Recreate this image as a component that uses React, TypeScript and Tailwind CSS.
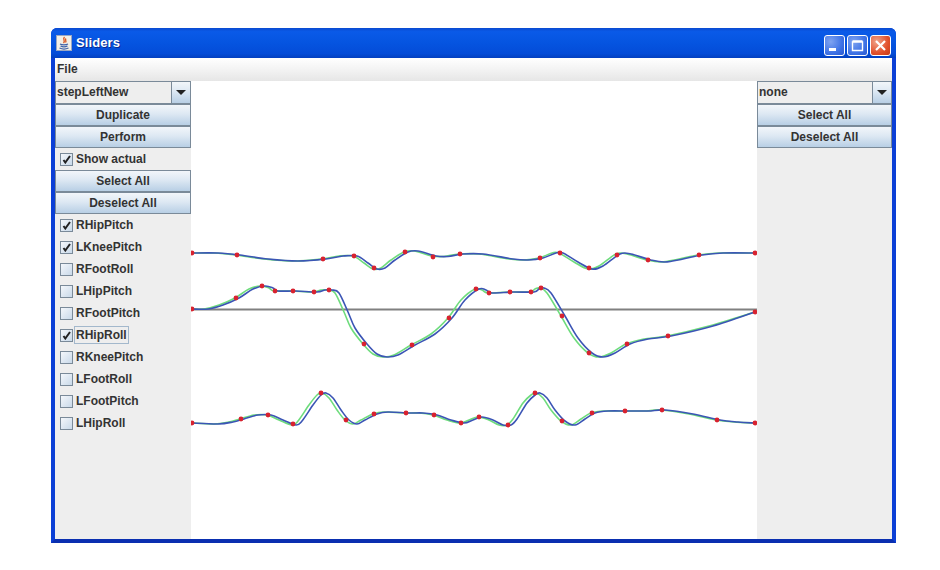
import React from 'react';

// points the curve passes through, hand read off the plot
const curves: [number, number][][] = [
  [[192, 253], [215, 253], [237, 255], [265, 259], [295, 261], [323, 259], [340, 256], [354, 256], [365, 263], [374, 269], [382, 268], [392, 260], [405, 252], [415, 251], [433, 256], [445, 256.5], [460, 254], [480, 254], [510, 259], [525, 260], [540, 258], [553, 253], [560, 253], [575, 262], [589, 269], [600, 266], [617, 254], [628, 254], [648, 260], [662, 262], [680, 259], [699, 255], [720, 253], [755, 253]],
  [[192, 309], [205, 309], [220, 305], [236, 298], [250, 289], [262, 286], [270, 288], [275, 291], [293, 291], [314, 292], [322, 290], [329, 290], [336, 293], [345, 312], [352, 328], [364, 344], [374, 354], [384, 357], [395, 355], [412, 345], [432, 334], [449, 318], [462, 300], [476, 289], [483, 290], [489, 293], [510, 292], [531, 292], [536, 289], [541, 288], [548, 293], [562, 316], [575, 338], [589, 353], [600, 357], [612, 353], [627, 344], [645, 339], [668, 336], [710, 326], [755, 312]],
  [[192, 423], [215, 424], [230, 422], [241, 419], [255, 415], [268, 415], [280, 420], [293, 425], [299, 421], [310, 405], [318, 395], [323, 393], [330, 398], [338, 410], [346, 420], [354, 424], [362, 420], [374, 414], [385, 412], [406, 413], [420, 413], [434, 415], [448, 420], [461, 423], [470, 420], [479, 417], [490, 420], [500, 425], [508, 425], [514, 419], [524, 403], [532, 395], [537, 393], [544, 398], [552, 410], [562, 421], [572, 425], [582, 419], [592, 413], [605, 411], [625, 411], [645, 411], [662, 410], [690, 414], [717, 420], [735, 422], [755, 423]],
];

const dots: [number, number][][] = [
  [[192, 253], [237, 255], [323, 259], [354, 256], [374, 268], [405, 252], [433, 257], [460, 254], [540, 258], [560, 253], [589, 268], [617, 255], [648, 260], [699, 255], [755, 253]],
  [[192, 309], [236, 298], [262, 286], [275, 291], [293, 291], [314, 292], [329, 290], [364, 344], [412, 345], [449, 318], [476, 289], [489, 293], [510, 292], [531, 292], [541, 288], [562, 316], [589, 353], [627, 344], [668, 336], [755, 312]],
  [[192, 423], [241, 419], [268, 415], [293, 424], [321, 393], [346, 420], [374, 414], [406, 413], [434, 415], [461, 423], [479, 417], [508, 425], [535, 393], [562, 421], [592, 413], [625, 411], [662, 410], [717, 420], [755, 423]],
];

// catmull-rom through the points, as cubic segments
function smooth(pts: [number, number][], shift: number) {
  const p = pts.map(([x, y], i) => [i === 0 || i === pts.length - 1 ? x : x + shift, y]);
  let d = `M${p[0][0]},${p[0][1]}`;
  for (let i = 0; i < p.length - 1; i++) {
    const a = p[Math.max(i - 1, 0)];
    const b = p[i];
    const c = p[i + 1];
    const e = p[Math.min(i + 2, p.length - 1)];
    d += ` C${b[0] + (c[0] - a[0]) / 6},${b[1] + (c[1] - a[1]) / 6} ${c[0] - (e[0] - b[0]) / 6},${c[1] - (e[1] - b[1]) / 6} ${c[0]},${c[1]}`;
  }
  return d;
}

function SwingButton({ label }: { label: string }) {
  return (
    <button className="h-[22px] w-full border border-[#7a8a99] bg-[linear-gradient(#f2f6fa,#dde8f3_45%,#b8cfe5)] text-center text-xs font-bold text-[#333]">
      {label}
    </button>
  );
}

function Combo({ value }: { value: string }) {
  return (
    <div className="flex h-[23px] w-full border border-[#7a8a99] bg-[#eeeeee]">
      <span className="flex-1 pl-[1px] text-xs font-bold leading-[20px] text-[#333]">{value}</span>
      <span className="flex w-[19px] items-center justify-center border-l border-[#7a8a99] bg-[linear-gradient(#f2f6fa,#dde8f3_45%,#b8cfe5)]">
        <span className="h-0 w-0 border-x-[5px] border-t-[5px] border-x-transparent border-t-[#222]" />
      </span>
    </div>
  );
}

function Check({ label, checked, focus }: { label: string; checked?: boolean; focus?: boolean }) {
  return (
    <div className="flex h-[22px] items-center pl-[5px]">
      <span className="flex h-[13px] w-[13px] items-center justify-center border border-[#7a8a99] bg-[linear-gradient(135deg,#f4f7fb,#c9d9e9)]">
        {checked && (
          <svg width="9" height="9" viewBox="0 0 9 9">
            <path d="M1.5 5 L3.3 7.5 L8 1" fill="none" stroke="#222" strokeWidth="2" />
          </svg>
        )}
      </span>
      <span className={`ml-[2px] px-[1px] text-xs font-bold leading-[16px] text-[#333] ${focus ? 'outline outline-1 outline-[#a3b8cc]' : ''}`}>
        {label}
      </span>
    </div>
  );
}

function JavaIcon() {
  return (
    <svg width="16" height="16" viewBox="0 0 16 16">
      <rect x="0.5" y="0.5" width="15" height="15" fill="#f3efe6" stroke="#9aa7c2" />
      <path d="M8.5 2 C6 4.5 10 5.5 7.5 8 M10 3.5 C8.5 5 11 6 9.5 7.5" fill="none" stroke="#d9531e" strokeWidth="1.3" />
      <path d="M4 9 C6 10.2 10 10.2 12 9 M4.5 11 C6.5 12 9.5 12 11.5 11 M3.5 13 C6 14.2 10 14.2 12.5 13" fill="none" stroke="#3f62a8" strokeWidth="1.1" />
    </svg>
  );
}

function WinButton({ kind }: { kind: 'min' | 'max' | 'close' }) {
  const bg =
    kind === 'close'
      ? 'bg-[radial-gradient(circle_at_30%_30%,#f0a58c,#e2512c_60%,#c63a17)]'
      : 'bg-[radial-gradient(circle_at_30%_30%,#7fa3f0,#3f73e6_60%,#2a58d0)]';
  return (
    <div className={`flex h-[21px] w-[21px] items-center justify-center rounded-[3px] border border-white ${bg}`}>
      <svg width="15" height="15" viewBox="0 0 15 15">
        {kind === 'min' && <rect x="2" y="10" width="7" height="3" fill="#fff" />}
        {kind === 'max' && <path d="M2.5 4 H12.5 V12.5 H2.5 Z M2.5 3 H12.5" fill="none" stroke="#fff" strokeWidth="1.4" />}
        {kind === 'close' && <path d="M3 3 L12 12 M12 3 L3 12" stroke="#fff" strokeWidth="2.2" />}
      </svg>
    </div>
  );
}

const joints: [string, boolean, boolean][] = [
  ['RHipPitch', true, false],
  ['LKneePitch', true, false],
  ['RFootRoll', false, false],
  ['LHipPitch', false, false],
  ['RFootPitch', false, false],
  ['RHipRoll', true, true],
  ['RKneePitch', false, false],
  ['LFootRoll', false, false],
  ['LFootPitch', false, false],
  ['LHipRoll', false, false],
];

export default function App() {
  return (
    <div className="h-[570px] w-[940px] overflow-hidden bg-white pl-[51px] pt-[28px] font-['Liberation_Sans',Arial,sans-serif]">
      <div className="flex h-[515px] w-[845px] flex-col rounded-t-[6px] border-x-4 border-b-4 border-x-[#0b3fd6] border-b-[#0a2fb0] bg-[#0b3fd6]">
        {/* title bar */}
        <div className="-mx-1 flex h-[30px] shrink-0 items-center rounded-t-[6px] bg-[linear-gradient(#0a4ad0,#0a5ae8_12%,#0554e0_50%,#044cd8_85%,#0340c0)] pl-[5px] pr-[5px]">
          <JavaIcon />
          <span className="ml-[4px] flex-1 text-[13px] font-bold tracking-[0.1px] text-white [text-shadow:1px_1px_#0a2a90]">Sliders</span>
          <div className="mt-[4px] flex gap-[2px]">
            <WinButton kind="min" />
            <WinButton kind="max" />
            <WinButton kind="close" />
          </div>
        </div>
        {/* menu */}
        <div className="flex h-[23px] shrink-0 items-center bg-[linear-gradient(#ffffff,#f3f3f3_50%,#e6e6e6)] pb-[2px] pl-[2px] text-xs font-bold text-[#333]">
          File
        </div>
        <div className="flex min-h-0 flex-1">
          <div className="flex w-[136px] shrink-0 flex-col bg-[#eeeeee]">
            <Combo value="stepLeftNew" />
            <SwingButton label="Duplicate" />
            <SwingButton label="Perform" />
            <Check label="Show actual" checked />
            <SwingButton label="Select All" />
            <SwingButton label="Deselect All" />
            {joints.map(([name, on, focus]) => (
              <Check key={name} label={name} checked={on} focus={focus} />
            ))}
          </div>
          <div className="min-w-0 flex-1 bg-white">
            <svg width="566" height="458" viewBox="191 81 566 458" className="block">
              <line x1="191" y1="309.5" x2="757" y2="309.5" stroke="#808080" strokeWidth="2" />
              {curves.map((pts, i) => (
                <g key={i} fill="none" strokeWidth="1.6">
                  <path d={smooth(pts, -1)} stroke="#6edc7c" />
                  <path d={smooth(pts, 3)} stroke="#3b55b5" />
                  {dots[i].map(([x, y]) => (
                    <circle key={x} cx={x} cy={y} r="2.4" fill="#d8222f" stroke="none" />
                  ))}
                </g>
              ))}
            </svg>
          </div>
          <div className="flex w-[135px] shrink-0 flex-col bg-[#eeeeee]">
            <Combo value="none" />
            <SwingButton label="Select All" />
            <SwingButton label="Deselect All" />
          </div>
        </div>
      </div>
    </div>
  );
}
